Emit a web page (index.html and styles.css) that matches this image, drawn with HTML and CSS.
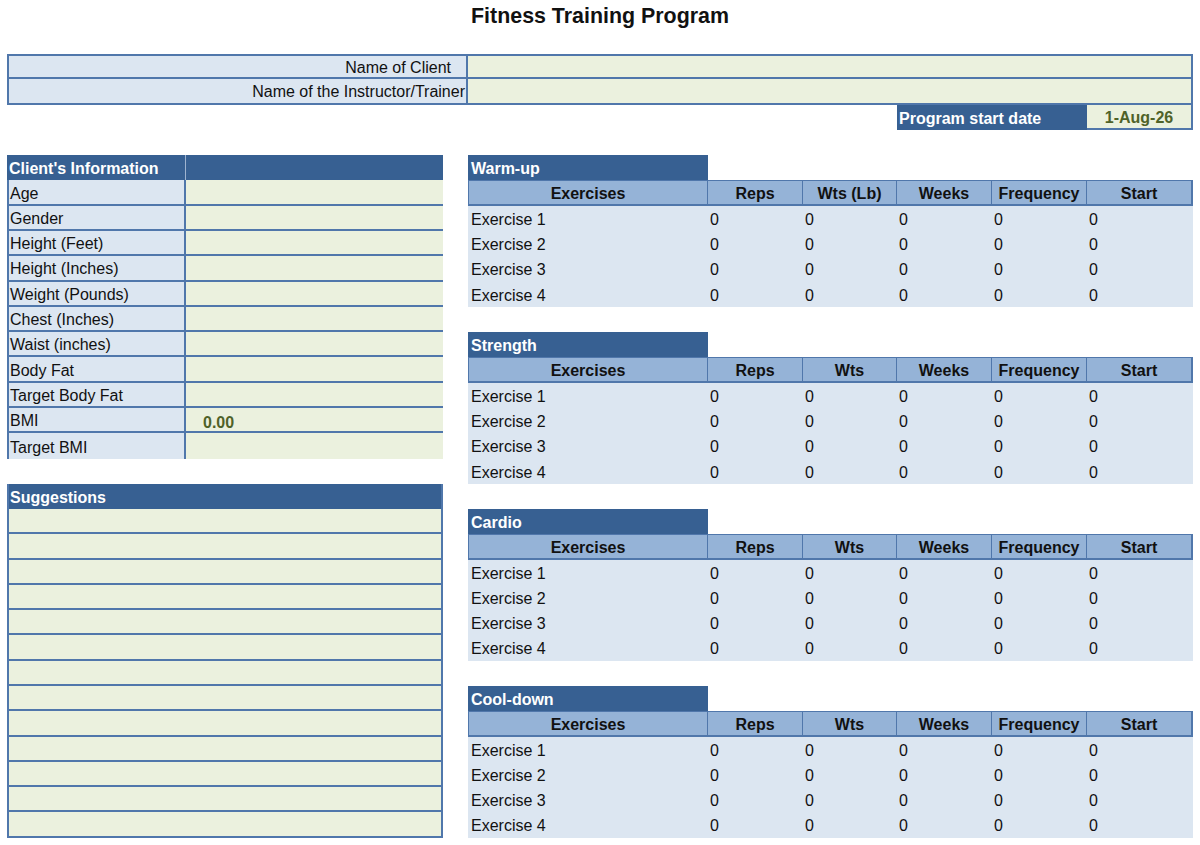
FILE: index.html
```html
<!DOCTYPE html>
<html>
<head>
<meta charset="utf-8">
<link rel="stylesheet" href="styles.css">
</head>
<body>
<h1 class="title">Fitness Training Program</h1>
<div class="sheet">
  <div class="names">
    <div class="name-label client-name">Name of Client</div><div class="name-value"></div>
    <div class="name-label">Name of the Instructor/Trainer</div><div class="name-value"></div>
  </div>
  <div class="start-row">
    <div class="start-label">Program start date</div>
    <div class="start-value">1-Aug-26</div>
  </div>
  <div class="blank-row"></div>
  <div class="columns">
    <div class="left">
      <div class="client">
        <div class="client-head">Client's Information</div><div class="client-head2"></div>
        <div class="lbl">Age</div><div class="val"></div>
        <div class="lbl">Gender</div><div class="val"></div>
        <div class="lbl">Height (Feet)</div><div class="val"></div>
        <div class="lbl">Height (Inches)</div><div class="val"></div>
        <div class="lbl">Weight (Pounds)</div><div class="val"></div>
        <div class="lbl">Chest (Inches)</div><div class="val"></div>
        <div class="lbl">Waist (inches)</div><div class="val"></div>
        <div class="lbl">Body Fat</div><div class="val"></div>
        <div class="lbl">Target Body Fat</div><div class="val"></div>
        <div class="lbl">BMI</div><div class="val bmi">0.00</div>
        <div class="lbl last">Target BMI</div><div class="val last"></div>
      </div>
      <div class="blank-row"></div>
      <div class="suggestions">
        <div class="sug-head">Suggestions</div>
        <div class="sug-row"></div><div class="sug-row"></div><div class="sug-row"></div>
        <div class="sug-row"></div><div class="sug-row"></div><div class="sug-row"></div>
        <div class="sug-row"></div><div class="sug-row"></div><div class="sug-row"></div>
        <div class="sug-row"></div><div class="sug-row"></div><div class="sug-row"></div>
        <div class="sug-row"></div>
      </div>
    </div>
    <div class="right">
      <div class="section">
        <div class="sec-title">Warm-up</div>
        <div class="grid">
          <div class="th">Exercises</div><div class="th">Reps</div><div class="th">Wts (Lb)</div><div class="th">Weeks</div><div class="th">Frequency</div><div class="th">Start</div>
          <div class="td">Exercise 1</div><div class="td num">0</div><div class="td num">0</div><div class="td num">0</div><div class="td num">0</div><div class="td num">0</div>
          <div class="td">Exercise 2</div><div class="td num">0</div><div class="td num">0</div><div class="td num">0</div><div class="td num">0</div><div class="td num">0</div>
          <div class="td">Exercise 3</div><div class="td num">0</div><div class="td num">0</div><div class="td num">0</div><div class="td num">0</div><div class="td num">0</div>
          <div class="td">Exercise 4</div><div class="td num">0</div><div class="td num">0</div><div class="td num">0</div><div class="td num">0</div><div class="td num">0</div>
        </div>
      </div>
      <div class="blank-row"></div>
      <div class="section">
        <div class="sec-title">Strength</div>
        <div class="grid">
          <div class="th">Exercises</div><div class="th">Reps</div><div class="th">Wts</div><div class="th">Weeks</div><div class="th">Frequency</div><div class="th">Start</div>
          <div class="td">Exercise 1</div><div class="td num">0</div><div class="td num">0</div><div class="td num">0</div><div class="td num">0</div><div class="td num">0</div>
          <div class="td">Exercise 2</div><div class="td num">0</div><div class="td num">0</div><div class="td num">0</div><div class="td num">0</div><div class="td num">0</div>
          <div class="td">Exercise 3</div><div class="td num">0</div><div class="td num">0</div><div class="td num">0</div><div class="td num">0</div><div class="td num">0</div>
          <div class="td">Exercise 4</div><div class="td num">0</div><div class="td num">0</div><div class="td num">0</div><div class="td num">0</div><div class="td num">0</div>
        </div>
      </div>
      <div class="blank-row"></div>
      <div class="section">
        <div class="sec-title">Cardio</div>
        <div class="grid">
          <div class="th">Exercises</div><div class="th">Reps</div><div class="th">Wts</div><div class="th">Weeks</div><div class="th">Frequency</div><div class="th">Start</div>
          <div class="td">Exercise 1</div><div class="td num">0</div><div class="td num">0</div><div class="td num">0</div><div class="td num">0</div><div class="td num">0</div>
          <div class="td">Exercise 2</div><div class="td num">0</div><div class="td num">0</div><div class="td num">0</div><div class="td num">0</div><div class="td num">0</div>
          <div class="td">Exercise 3</div><div class="td num">0</div><div class="td num">0</div><div class="td num">0</div><div class="td num">0</div><div class="td num">0</div>
          <div class="td">Exercise 4</div><div class="td num">0</div><div class="td num">0</div><div class="td num">0</div><div class="td num">0</div><div class="td num">0</div>
        </div>
      </div>
      <div class="blank-row"></div>
      <div class="section">
        <div class="sec-title">Cool-down</div>
        <div class="grid">
          <div class="th">Exercises</div><div class="th">Reps</div><div class="th">Wts</div><div class="th">Weeks</div><div class="th">Frequency</div><div class="th">Start</div>
          <div class="td">Exercise 1</div><div class="td num">0</div><div class="td num">0</div><div class="td num">0</div><div class="td num">0</div><div class="td num">0</div>
          <div class="td">Exercise 2</div><div class="td num">0</div><div class="td num">0</div><div class="td num">0</div><div class="td num">0</div><div class="td num">0</div>
          <div class="td">Exercise 3</div><div class="td num">0</div><div class="td num">0</div><div class="td num">0</div><div class="td num">0</div><div class="td num">0</div>
          <div class="td">Exercise 4</div><div class="td num">0</div><div class="td num">0</div><div class="td num">0</div><div class="td num">0</div><div class="td num">0</div>
        </div>
      </div>
    </div>
  </div>
</div>
</body>
</html>
```

FILE: styles.css
```css
:root {
  --row: 25.29px;
  --dark: #376092;
  --mid: #95b3d7;
  --light: #dce6f1;
  --olive: #ebf1de;
  --line: #5077ab;
}
* { box-sizing: border-box; }
html, body { margin: 0; padding: 0; background: #fff; }
body {
  font-family: "Liberation Sans", Arial, sans-serif;
  font-size: 16px;
  color: #111;
  width: 1200px;
}
.title {
  margin: 0;
  height: 54px;
  font-size: 21.4px;
  font-weight: bold;
  line-height: 32px;
  text-align: center;
  color: #111;
}
.sheet {
  margin-left: 7px;
  width: 1186px;
}
.names {
  display: grid;
  grid-template-columns: 461px 725px;
  grid-template-rows: repeat(2, var(--row));
}
.name-label {
  background: var(--light);
  padding-right: 1px;
  padding-top: 2px;
  border-left: 2px solid var(--line);
  border-right: 2px solid var(--line);
  border-bottom: 2px solid var(--line);
  white-space: nowrap;
  display: flex;
  align-items: center;
  justify-content: flex-end;
}
.name-label.client-name { padding-right: 15px; }
.name-value {
  background: var(--olive);
  border-right: 2px solid var(--line);
  border-bottom: 2px solid var(--line);
}
.names > div:nth-child(1), .names > div:nth-child(2) { border-top: 2px solid var(--line); }
.start-row {
  display: flex;
  justify-content: flex-end;
  height: var(--row);
}
.start-label {
  width: 190px;
  background: var(--dark);
  color: #fff;
  font-weight: bold;
  padding-left: 2px;
  padding-top: 1px;
  line-height: var(--row);
}
.start-value {
  width: 106px;
  background: var(--olive);
  color: #4f6228;
  font-weight: bold;
  text-align: center;
  padding-top: 1px;
  line-height: calc(var(--row) - 2px);
  border-right: 2px solid var(--line);
  border-bottom: 2px solid var(--line);
}
.blank-row { height: var(--row); }
.columns {
  display: flex;
  gap: 25px;
}
.left { width: 436px; }
.right { width: 725px; }
.client {
  display: grid;
  grid-template-columns: 179px 257px;
  grid-auto-rows: var(--row);
}
.client-head {
  background: var(--dark);
  color: #fff;
  font-weight: bold;
  padding-left: 2px;
  padding-top: 1px;
  line-height: var(--row);
  border-right: 1px solid #9fb4d0;
  white-space: nowrap;
}
.client-head2 { background: var(--dark); }
.lbl {
  background: var(--light);
  border-left: 2px solid var(--line);
  border-right: 2px solid var(--line);
  border-bottom: 2px solid var(--line);
  padding-left: 1px;
  padding-top: 3px;
  display: flex;
  align-items: center;
  white-space: nowrap;
}
.val {
  background: var(--olive);
  border-bottom: 2px solid var(--line);
  display: flex;
  align-items: center;
}
.lbl.last, .val.last { border-bottom: none; }
.lbl.last { padding-top: 5px; }
.bmi {
  color: #4f6228;
  font-weight: bold;
  padding-left: 17px;
  padding-top: 6px;
}
.suggestions {
  display: grid;
  grid-auto-rows: var(--row);
  border-left: 2px solid var(--line);
  border-right: 2px solid var(--line);
}
.sug-head {
  background: var(--dark);
  color: #fff;
  font-weight: bold;
  padding-left: 1px;
  padding-top: 1px;
  line-height: var(--row);
}
.sug-row {
  background: var(--olive);
  border-bottom: 2px solid var(--line);
}
.section { display: flex; flex-direction: column; }
.sec-title {
  width: 240px;
  height: var(--row);
  background: var(--dark);
  color: #fff;
  font-weight: bold;
  padding-left: 3px;
  padding-top: 1px;
  line-height: var(--row);
}
.grid {
  display: grid;
  grid-template-columns: 240px 95px 94px 95px 95px 106px;
  grid-auto-rows: var(--row);
}
.th {
  background: var(--mid);
  font-weight: bold;
  text-align: center;
  padding-top: 2px;
  line-height: calc(var(--row) - 3px);
  border-top: 1px solid var(--line);
  border-bottom: 2px solid var(--line);
  border-right: 1px solid var(--line);
  white-space: nowrap;
}
.th:first-child { border-left: 1px solid var(--line); }
.th:nth-child(6) { border-right: 2px solid var(--line); }
.td {
  background: var(--light);
  padding-left: 3px;
  padding-top: 1px;
  line-height: var(--row);
  white-space: nowrap;
}
.num { padding-left: 2px; }
```
